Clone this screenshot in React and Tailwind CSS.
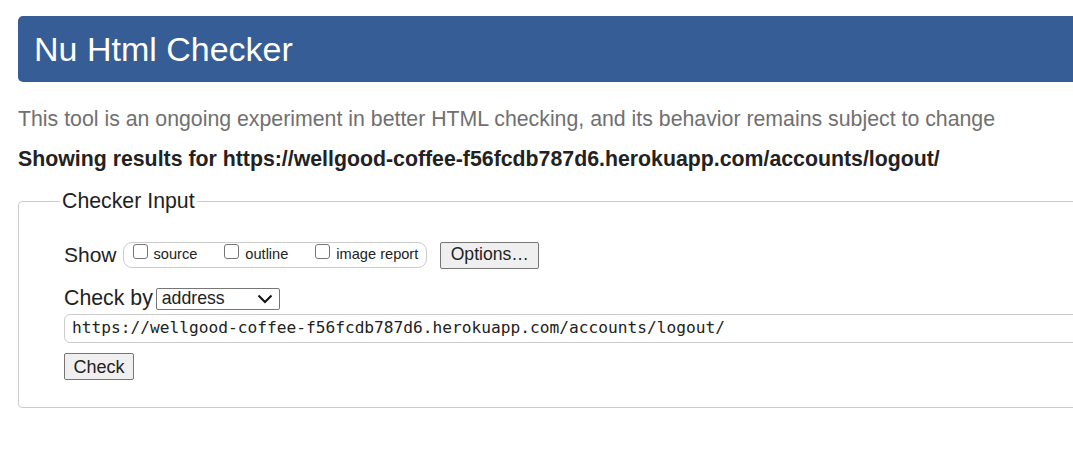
import React from 'react'

const url = 'https://wellgood-coffee-f56fcdb787d6.herokuapp.com/accounts/logout/'

function Box({ label }) {
  return (
    <label className="flex items-center gap-[6px] mr-[27px] last:mr-0">
      <span className="shrink-0 w-[15px] h-[15px] border border-[#767676] rounded-[3px] bg-white mt-[-6px]" />
      <span className="text-[14.6px] text-[#222]">{label}</span>
    </label>
  )
}

export default function App() {
  return (
    <div className="w-[1073px] h-[456px] overflow-hidden bg-white font-['Liberation_Sans',Arial,sans-serif] text-[#222]">
      <div className="w-[1200px] pl-[18px] pt-[16px]">
        {/* Header */}
        <div className="h-[66px] bg-[#365d95] rounded-l-[5px] flex items-center pl-[16px]">
          <h1 className="text-[34px] text-white leading-none">Nu Html Checker</h1>
        </div>

        <p className="mt-[24px] text-[21.3px] text-[#707070] leading-[26px]">
          This tool is an ongoing experiment in better HTML checking, and its behavior remains subject to change
        </p>
        <p className="mt-[14px] text-[21.3px] font-bold text-[#222] leading-[26px]">
          Showing results for {url}
        </p>

        {/* Checker Input */}
        <fieldset className="mt-[17px] border border-[#cccccc] rounded-[4px] h-[219px] p-0">
          <legend className="ml-[41px] px-[2px] text-[21.3px] leading-[24px]">Checker Input</legend>

          <div className="pl-[45px]">
            <div className="flex items-center mt-[28px] h-[28px]">
              <span className="text-[21px] mr-[6px]">Show</span>
              <div className="flex items-center h-[26px] border border-[#cccccc] rounded-[9px] pl-[9px] pr-[8px]">
                <Box label="source" />
                <Box label="outline" />
                <Box label="image report" />
              </div>
              <button className="ml-[13px] h-[27px] w-[99px] bg-[#efefef] border border-[#767676] rounded-[2px] text-[17.6px] leading-none">
                Options…
              </button>
            </div>

            <div className="flex items-center mt-[19px] h-[22px]">
              <span className="text-[21.3px] mr-[3px]">Check by</span>
              <div className="w-[124px] h-[22px] border border-[#767676] rounded-[2px] flex items-center justify-between pl-[5px] pr-[6px]">
                <span className="text-[17.7px] leading-none">address</span>
                <svg width="16" height="10" viewBox="0 0 16 10" fill="none">
                  <path d="M1.5 1.5 L8 8 L14.5 1.5" stroke="#111" strokeWidth="2" />
                </svg>
              </div>
            </div>

            <div className="mt-[4px] h-[29px] border border-[#cccccc] rounded-l-[6px] flex items-center pl-[7px]">
              <span className="font-['DejaVu_Sans_Mono',monospace] text-[16.2px] text-[#222]">{url}</span>
            </div>

            <button className="mt-[10px] h-[27px] w-[70px] bg-[#efefef] border border-[#767676] rounded-[2px] text-[18px] leading-none">
              Check
            </button>
          </div>
        </fieldset>
      </div>
    </div>
  )
}
